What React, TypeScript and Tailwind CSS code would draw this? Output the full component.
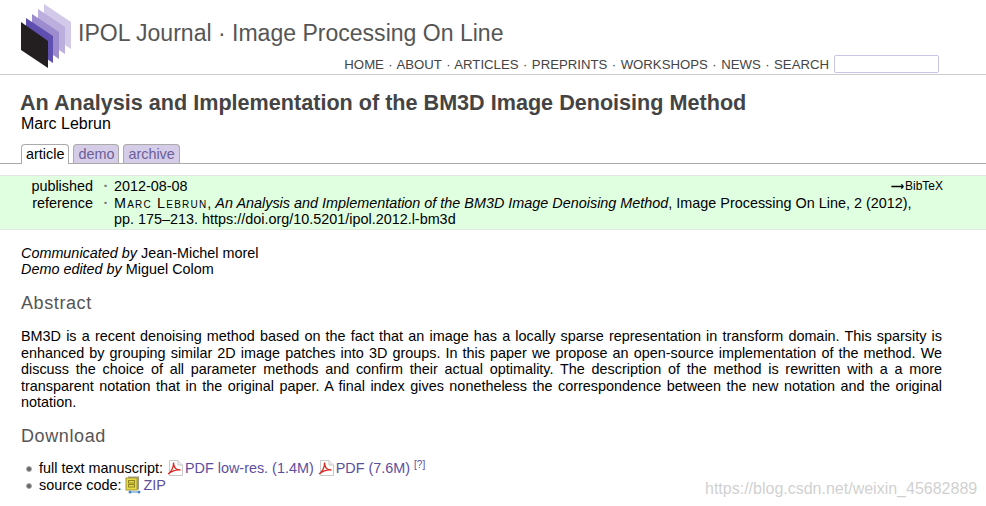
const LINKS = ['HOME', 'ABOUT', 'ARTICLES', 'PREPRINTS', 'WORKSHOPS', 'NEWS', 'SEARCH']

const Logo = () => (
  <svg width="52" height="70" viewBox="0 0 52 70" className="shrink-0">
    <polygon points="24,4 51,22 51,49 24,31" fill="#d3c9e8" />
    <polygon points="18,9 45,27 45,54 18,36" fill="#bcaedd" />
    <polygon points="12,14 39,32 39,59 12,41" fill="#9d8ccd" />
    <polygon points="6,18 33,36 33,63 6,45" fill="#5f4fb0" />
    <polygon points="1,22 28,41 28,68 1,50" fill="#231f20" />
  </svg>
)

const PdfIcon = () => (
  <svg width="16" height="16" viewBox="0 0 16 16" className="inline-block align-[-3px] mr-[2px]">
    <path d="M2.5 .5H11L15.5 5V15.5H2.5Z" fill="#fff" stroke="#c9c9c9" />
    <path d="M11 .5V5H15.5" fill="#eee" stroke="#c9c9c9" />
    <path d="M1 14C4 12 7 7 6.5 2.5C6.5 7 9 10 13.5 10C10 9.5 5 11 1 14Z" fill="none" stroke="#d8281e" strokeWidth="1.3" />
  </svg>
)

const ZipIcon = () => (
  <svg width="16" height="18" viewBox="0 0 16 18" className="inline-block align-[-4px] mr-[2px]">
    <rect x="3" y="0.5" width="11" height="13" fill="#9a9a8c" />
    <rect x="1" y="2" width="11" height="12" fill="#e6d94a" stroke="#a39a30" />
    <rect x="3.5" y="4.5" width="6" height="2.5" fill="none" stroke="#8f8620" />
    <rect x="3.5" y="8.5" width="6" height="2.5" fill="none" stroke="#8f8620" />
    <path d="M5 16H14" stroke="#4a86c8" strokeWidth="1" />
    <circle cx="5" cy="16" r="1.5" fill="#4a86c8" />
    <circle cx="14" cy="16" r="1.5" fill="#4a86c8" />
  </svg>
)

const Bullet = () => (
  <span className="-ml-[13px] mr-[7px] inline-block h-[6px] w-[6px] rounded-full border border-[#aaa] bg-[#666] align-[1px]" />
)

export default function App() {
  return (
    <div className="relative h-[506px] w-[986px] overflow-hidden bg-white font-['Liberation_Sans',Arial,sans-serif] text-[14.4px] leading-4 text-black">
      <header className="h-[75px] border-b border-[#ccc] pl-5 pr-[47px]">
        <div className="flex h-[50px] items-start">
          <Logo />
          <div className="ml-[6px] mt-[21px] text-[23.04px] leading-6 text-[#555]">IPOL Journal · Image Processing On Line</div>
        </div>
        <nav className="flex h-[24px] items-start justify-end text-[13.2px] leading-4 text-[#444] [word-spacing:0.8px]">
          <div className="mt-[7px]">
            {LINKS.join(' · ')}
          </div>
          <input className="ml-[5px] mt-[5px] h-[18px] w-[105px] rounded-[2px] border border-[#cbc3e8] bg-white" />
        </nav>
      </header>

      <h1 className="ml-5 mt-[16px] text-[21.6px] font-bold leading-6 text-[#444]">An Analysis and Implementation of the BM3D Image Denoising Method</h1>
      <div className="ml-[21px] mt-px text-[16px] leading-4">Marc Lebrun</div>

      <div className="mt-[12px] flex h-[20px] items-end gap-[4px] border-b border-[#aaa] pl-[21px]">
        <div className="relative top-px h-[20px] rounded-t-[4px] border border-b-0 border-[#aaa] bg-white px-[4px] pt-[1px]">article</div>
        <div className="h-[19px] rounded-t-[4px] border border-b-0 border-[#aaa] bg-[#d5cce8] px-[4px] pt-[1px] text-[#6b5f99]">demo</div>
        <div className="h-[19px] rounded-t-[4px] border border-b-0 border-[#aaa] bg-[#d5cce8] px-[4px] pt-[1px] text-[#6b5f99]">archive</div>
      </div>

      <section className="relative mt-[11px] flex h-[55px] border-y border-[#e4e4e4] bg-[#e0ffe0] pt-[2px]">
        <div className="w-[93px] shrink-0 text-right">
          <div>published</div>
          <div className="mt-px">reference</div>
        </div>
        <div className="flex w-[21px] shrink-0 flex-col items-center pl-[5px] font-bold text-[#777]">
          <div>·</div>
          <div className="mt-px">·</div>
        </div>
        <div className="w-[800px]">
          <div>2012-08-08</div>
          <div className="mt-px">
            <span className="tracking-[1.2px] [font-variant:small-caps]">Marc Lebrun</span>, <i>An Analysis and Implementation of the BM3D Image Denoising Method</i>, Image Processing On Line, 2 (2012), pp. 175–213. https://doi.org/10.5201/ipol.2012.l-bm3d
          </div>
        </div>
        <div className="absolute right-[43px] top-[2px] flex items-center gap-[1px] text-[12px]">
          <span className="text-[9px] font-bold">⟶</span>
          <span>BibTeX</span>
        </div>
      </section>

      <div className="ml-[21px] mt-[15px]">
        <div><i>Communicated by</i> Jean-Michel morel</div>
        <div><i>Demo edited by</i> Miguel Colom</div>
      </div>

      <h2 className="ml-[21px] mt-[16px] text-[18px] font-normal leading-5 tracking-[0.6px] text-[#555]">Abstract</h2>

      <p className="ml-[21px] mt-[15px] w-[921px] text-justify leading-[16.5px]">
        BM3D is a recent denoising method based on the fact that an image has a locally sparse representation in transform domain. This sparsity is enhanced by grouping similar 2D image patches into 3D groups. In this paper we propose an open-source implementation of the method. We discuss the choice of all parameter methods and confirm their actual optimality. The description of the method is rewritten with a a more transparent notation that in the original paper. A final index gives nonetheless the correspondence between the new notation and the original notation.
      </p>

      <h2 className="ml-[21px] mt-[15px] text-[18px] font-normal leading-5 tracking-[0.6px] text-[#555]">Download</h2>

      <ul className="ml-[39px] mt-[14px]">
        <li>
          <Bullet />full text manuscript: <span className="text-[#5d4e9e]"><PdfIcon />PDF low-res. (1.4M) <PdfIcon />PDF (7.6M)</span> <sup className="text-[10px] text-[#5d4e9e]">[?]</sup>
        </li>
        <li>
          <Bullet />source code: <span className="text-[#5d4e9e]"><ZipIcon />ZIP</span>
        </li>
      </ul>

      <div className="absolute left-[705px] top-[479px] text-[16px] leading-5 text-[#bbb]/70">https://blog.csdn.net/weixin_45682889</div>
    </div>
  )
}
